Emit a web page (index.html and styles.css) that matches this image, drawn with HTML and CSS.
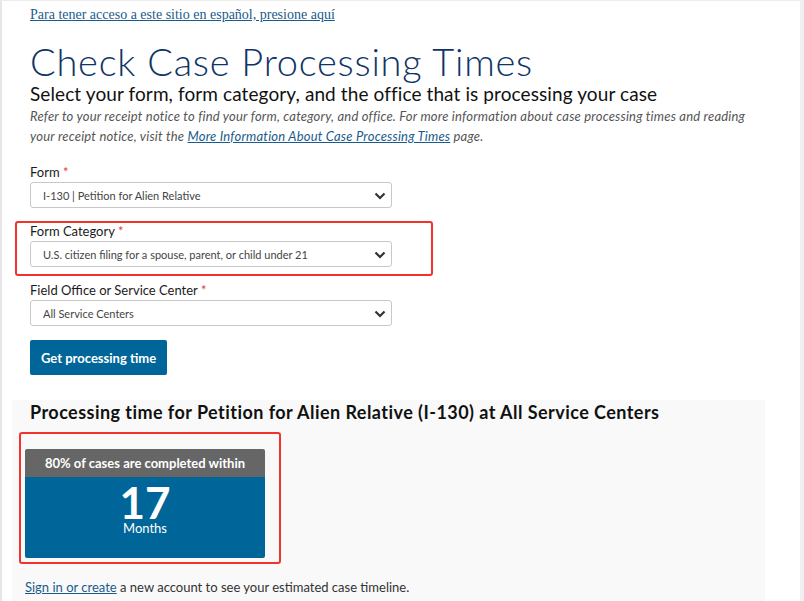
FILE: index.html
```html
<!DOCTYPE html>
<html>

<head>
    <meta charset="utf-8">
    <title>Check Case Processing Times</title>
    <link rel="stylesheet" href="styles.css">
</head>

<body>
    <div class="page">
        <div class="content">
            <a class="lang-link" href="#">Para tener acceso a este sitio en español, presione aquí</a>

            <h1 class="title">Check Case Processing Times</h1>
            <h2 class="subtitle">Select your form, form category, and the office that is processing your case</h2>
            <p class="intro">Refer to your receipt notice to find your form, category, and office. For more information about case processing times and reading your receipt notice, visit the <a href="#">More Information About Case Processing Times</a> page.</p>

            <div class="field">
                <label>Form <span class="req">*</span></label>
                <div class="select-wrap">
                    <select><option>I-130 | Petition for Alien Relative</option></select>
                    <svg class="chevron" width="12" height="8" viewBox="0 0 12 8"><path d="M1.5 1.5 L6 6 L10.5 1.5" fill="none" stroke="#333" stroke-width="2.2"/></svg>
                </div>
            </div>

            <div class="field">
                <label>Form Category <span class="req">*</span></label>
                <div class="select-wrap">
                    <select><option>U.S. citizen filing for a spouse, parent, or child under 21</option></select>
                    <svg class="chevron" width="12" height="8" viewBox="0 0 12 8"><path d="M1.5 1.5 L6 6 L10.5 1.5" fill="none" stroke="#333" stroke-width="2.2"/></svg>
                </div>
                <div class="highlight highlight-category"></div>
            </div>

            <div class="field">
                <label>Field Office or Service Center <span class="req">*</span></label>
                <div class="select-wrap">
                    <select><option>All Service Centers</option></select>
                    <svg class="chevron" width="12" height="8" viewBox="0 0 12 8"><path d="M1.5 1.5 L6 6 L10.5 1.5" fill="none" stroke="#333" stroke-width="2.2"/></svg>
                </div>
            </div>

            <button class="btn">Get processing time</button>
        </div>

        <div class="result">
            <h3 class="result-title">Processing time for Petition for Alien Relative (I-130) at All Service Centers</h3>
            <div class="card-area">
                <div class="card">
                    <div class="card-head">80% of cases are completed within</div>
                    <div class="card-body">
                        <div class="card-num">17</div>
                        <div class="card-unit">Months</div>
                    </div>
                </div>
                <div class="highlight highlight-card"></div>
            </div>
            <p class="signin"><a href="#">Sign in or create</a> a new account to see your estimated case timeline.</p>
        </div>
    </div>
</body>

</html>
```

FILE: styles.css
```css
body {
    margin: 0;
    font-family: "Lato", "Open Sans", sans-serif;
    color: #1b1b1b;
    background-color: #fff;
}

.page {
    width: 804px;
    min-height: 601px;
    border-left: 2px solid #e6e6e6;
    border-right: 4px solid #f0f0f0;
    border-top: 1px solid #ececec;
    box-sizing: border-box;
}

.content {
    padding: 2px 0 0 28px;
}

.lang-link {
    font-family: "Liberation Serif", serif;
    font-size: 14px;
    color: #1a5b8c;
}

.title {
    margin: 17px 0 0 0;
    font-size: 38px;
    font-weight: 300;
    line-height: 42px;
    letter-spacing: 0.75px;
    color: #0f3566;
}

.subtitle {
    margin: 0;
    font-size: 19px;
    font-weight: 400;
    line-height: 24px;
    letter-spacing: 0.1px;
    color: #111;
}

.intro {
    margin: 0;
    font-size: 13px;
    font-style: italic;
    line-height: 20px;
    letter-spacing: 0.2px;
    color: #555;
    width: 735px;
}

.intro a {
    color: #1a5b8c;
}

.field {
    position: relative;
    margin-top: 17px;
}

.field + .field {
    margin-top: 14px;
}

.field label {
    display: block;
    font-size: 13px;
    line-height: 18px;
    color: #1b1b1b;
    margin-bottom: 1px;
}

.req {
    color: #e23b3b;
}

.select-wrap {
    position: relative;
    width: 362px;
}

.select-wrap select {
    -webkit-appearance: none;
    appearance: none;
    width: 362px;
    height: 26px;
    border: 1px solid #c8c8c8;
    border-radius: 3px;
    background-color: #fff;
    padding: 0 12px;
    font-family: "Lato", "Open Sans", sans-serif;
    font-size: 11px;
    color: #444;
}

.chevron {
    position: absolute;
    right: 6px;
    top: 10px;
}

.btn {
    margin-top: 14px;
    background-color: #006699;
    border: none;
    border-radius: 2px;
    color: #fff;
    font-family: "Lato", "Open Sans", sans-serif;
    font-weight: bold;
    font-size: 13px;
    height: 35px;
    padding: 0 11px;
}

.result {
    margin: 25px 35px 0 10px;
    background-color: #f9f9f9;
    padding: 1px 0 10px 0;
}

.result-title {
    margin: 1px 0 0 18px;
    font-size: 18px;
    font-weight: bold;
    line-height: 20px;
    letter-spacing: 0.45px;
    color: #111;
}

.card-area {
    position: relative;
    padding: 27px 0 0 13px;
}

.card {
    width: 240px;
    border-radius: 2px;
    overflow: hidden;
}

.card-head {
    background-color: #666;
    color: #fff;
    font-weight: bold;
    font-size: 13px;
    text-align: center;
    height: 28px;
    line-height: 28px;
}

.card-body {
    background-color: #006699;
    color: #fff;
    text-align: center;
    height: 81px;
    padding-top: 6px;
    box-sizing: border-box;
}

.card-num {
    font-size: 44px;
    font-weight: bold;
    line-height: 38px;
}

.card-unit {
    font-size: 13px;
    line-height: 15px;
}

.signin {
    margin: 21px 0 0 13px;
    font-size: 13px;
    color: #333;
}

.signin a {
    color: #1a5b8c;
}

.highlight {
    position: absolute;
    border: 2px solid #f2332b;
    border-radius: 3px;
}

.highlight-category {
    left: -15px;
    top: -1px;
    width: 414px;
    height: 51px;
}

.highlight-card {
    left: 7px;
    top: 10px;
    width: 258px;
    height: 128px;
}
```
